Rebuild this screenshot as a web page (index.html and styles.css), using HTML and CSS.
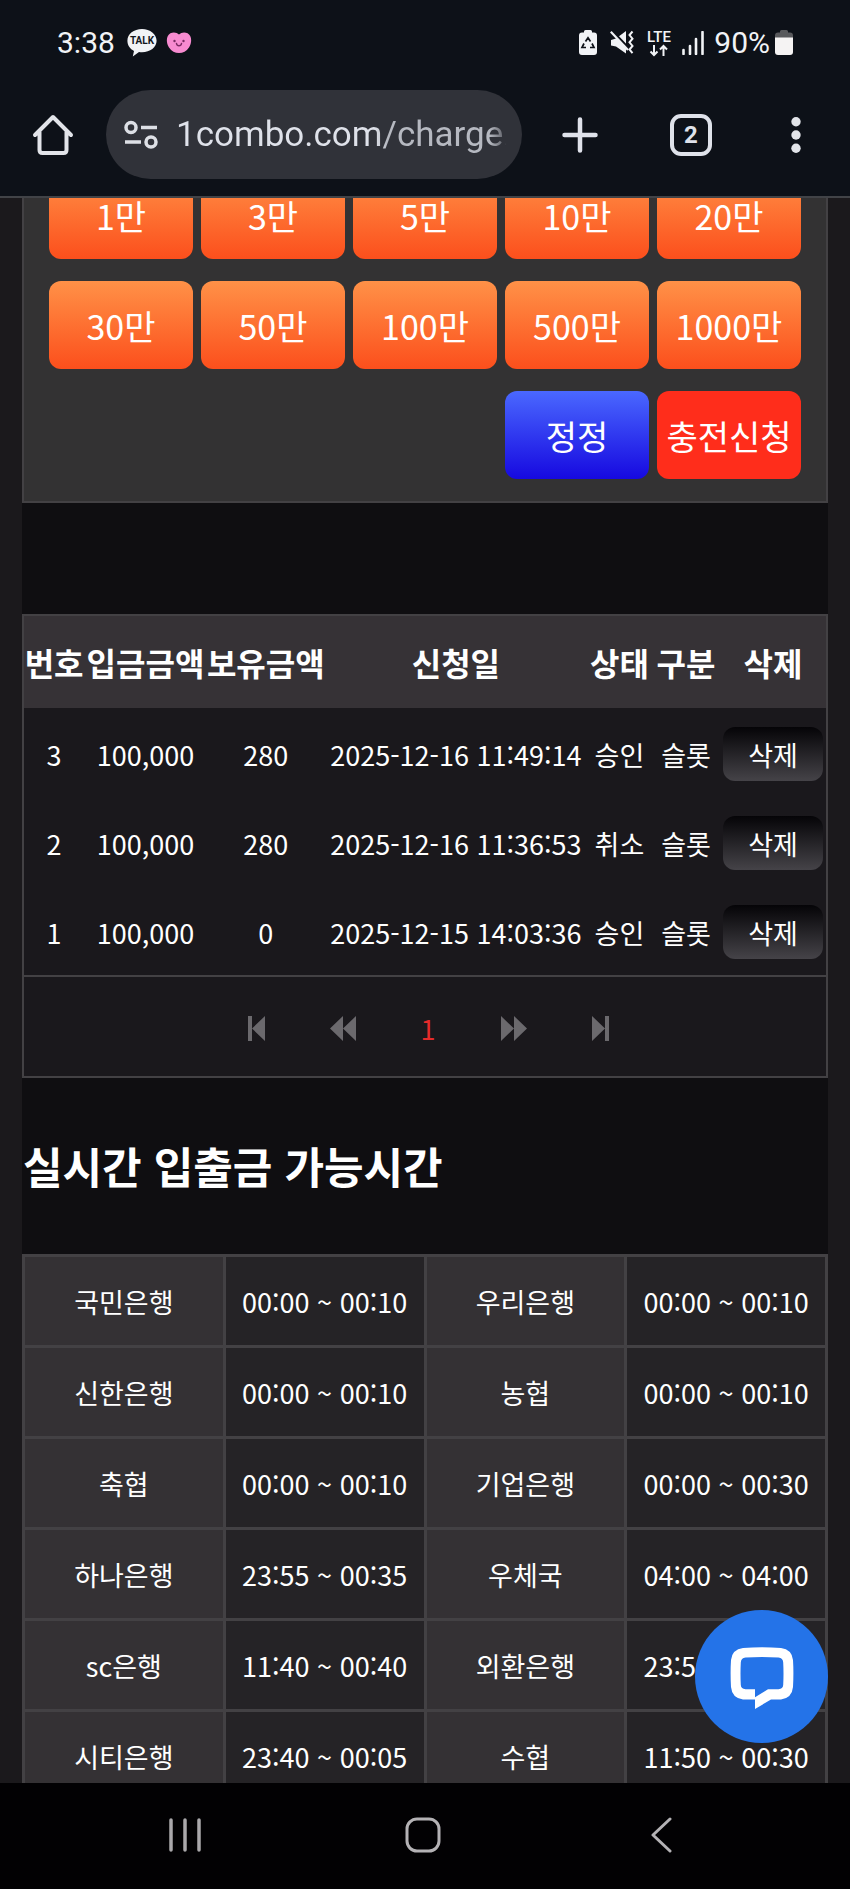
FILE: index.html
```html
<!DOCTYPE html>
<html lang="ko">
<head>
    <meta charset="UTF-8">
    <meta name="viewport" content="width=device-width, initial-scale=1.0">
    <title>충전신청</title>
    <link rel="stylesheet" href="styles.css">
</head>
<body>
<div class="screen">
    <header class="top">
        <div class="status">
            <span class="time">3:38</span>
            <svg class="talk" width="30" height="28" viewBox="0 0 30 28">
                <path d="M15 0C6.800 0 .4 5 .4 11.800c0 4.400 2.600 8.200 6.600 10.200L5.800 27.500l6.200-4.400c1 .1 2 .2 3 .2 8.200 0 14.600-5 14.600-11.500S23.200 0 15 0z" fill="#f1f3f6"/>
                <text class="talk-text" x="15" y="15" text-anchor="middle">TALK</text>
            </svg>
            <svg class="heart" width="26" height="22" viewBox="0 0 26 22">
                <path d="M13 2.500C10-.5 4-.2 1.800 4 .2 7 .6 12 3 15.500c2.500 3.800 6 5.500 10 5.500s7.500-1.700 10-5.500C25.400 12 25.800 7 24.200 4 22-.2 16-.5 13 2.500z" fill="#f78bd0"/>
                <circle cx="8.500" cy="9" r="1.200" fill="#7a2a63"/>
                <circle cx="17.500" cy="9" r="1.200" fill="#7a2a63"/>
                <path d="M10.500 11.500c.5 3 4.500 3 5 0" fill="none" stroke="#7a2a63" stroke-width="1.500" stroke-linecap="round"/>
            </svg>
            <div class="status-right">
                <svg width="18" height="25" viewBox="0 0 18 25">
                    <path d="M5 2.500V1.500Q5 0 6.500 0h5Q13 0 13 1.500v1h2Q18 2.500 18 5.500V22q0 3-3 3H3q-3 0-3-3V5.500q0-3 3-3z" fill="#f1f3f6"/>
                    <path d="M6.500 11.500L9 7.800l2.500 3.700M13 13.500l2 4h-4M7 17.500H3l2-4" fill="none" stroke="#0d1118" stroke-width="1.700"/>
                </svg>
                <svg class="mute" width="24" height="25" viewBox="0 0 24 25">
                    <path d="M1 10l5-1.500 10-7.500v22.500L6 16.500 1 15.500z" fill="#f1f3f6"/>
                    <path d="M2 1l19 20" stroke="#0d1118" stroke-width="3"/>
                    <path d="M.8 1.800L18 20" stroke="#f1f3f6" stroke-width="2.200"/>
                    <path d="M22.500 1.500l-3 3.600 3 3.600-3 3.600 3 3.600-3 3.600 3 3.600" fill="none" stroke="#f1f3f6" stroke-width="2"/>
                </svg>
                <svg class="lte" width="30" height="34" viewBox="0 0 30 34">
                    <text class="lte-text" x="15" y="16" text-anchor="middle">LTE</text>
                    <path d="M10 19v10M6.500 25.500L10 29l3.500-3.500M19.500 30V20M16 23.500l3.500-3.500 3.500 3.500" fill="none" stroke="#f1f3f6" stroke-width="2"/>
                </svg>
                <svg class="signal" width="22" height="24" viewBox="0 0 22 24">
                    <path d="M1.500 19v4M8 15v8M14 8v15M20.500 1v22" fill="none" stroke="#f1f3f6" stroke-width="2.600" stroke-linecap="round"/>
                </svg>
                <span>90%</span>
                <svg class="battery" width="18" height="25" viewBox="0 0 18 25">
                    <path d="M5 2.500V1.500Q5 0 6.500 0h5Q13 0 13 1.500v1h2Q18 2.500 18 5.500V8H0V5.500q0-3 3-3z" fill="#58595c"/>
                    <path d="M0 7.500h18V22q0 3-3 3H3q-3 0-3-3z" fill="#f5f3f3"/>
                </svg>
            </div>
        </div>

        <div class="toolbar">
            <button type="button" class="icon-btn" aria-label="홈">
                <svg width="42" height="42" viewBox="0 0 42 42" fill="none" stroke="#e2e4e9" stroke-width="4" stroke-linecap="round" stroke-linejoin="round">
                    <path d="M3 21L21 3l18 18M7.500 18v18q0 3 3 3h21q3 0 3-3V18"/>
                </svg>
            </button>
            <label class="address">
                <svg width="34" height="30" viewBox="0 0 34 30" fill="none" stroke="#dde0e6" stroke-width="3.500">
                    <circle cx="7" cy="7.500" r="5"/>
                    <path d="M17 7.500h16M1 22h16"/>
                    <circle cx="27" cy="22" r="5"/>
                </svg>
                <input type="text" class="url" value="1combo.com/charge." aria-label="주소">
            </label>
            <div class="actions">
                <button type="button" class="icon-btn" aria-label="새 탭">
                    <svg width="36" height="36" viewBox="0 0 36 36" stroke="#dfe2ea" stroke-width="4.500" stroke-linecap="round">
                        <path d="M18 2.500v31M2.500 18h31"/>
                    </svg>
                </button>
                <button type="button" class="tabs">2</button>
                <button type="button" class="icon-btn" aria-label="메뉴">
                    <svg width="24" height="36" viewBox="0 0 24 36" fill="#e2e4e9">
                        <circle cx="12" cy="4.700" r="4.700"/>
                        <circle cx="12" cy="18" r="4.700"/>
                        <circle cx="12" cy="31.300" r="4.700"/>
                    </svg>
                </button>
            </div>
        </div>
    </header>

    <main class="page">
        <div class="content">
            <form class="charge">
                <button type="button" class="amount">1만</button>
                <button type="button" class="amount">3만</button>
                <button type="button" class="amount">5만</button>
                <button type="button" class="amount">10만</button>
                <button type="button" class="amount">20만</button>
                <button type="button" class="amount">30만</button>
                <button type="button" class="amount">50만</button>
                <button type="button" class="amount">100만</button>
                <button type="button" class="amount">500만</button>
                <button type="button" class="amount">1000만</button>
                <button type="reset" class="amount reset">정정</button>
                <button type="button" class="amount submit">충전신청</button>
            </form>

            <table class="history">
                <colgroup>
                    <col class="c-no"><col class="c-amount"><col class="c-balance"><col class="c-date"><col class="c-state"><col class="c-type"><col class="c-delete">
                </colgroup>
                <thead>
                <tr>
                    <th>번호</th>
                    <th>입금금액</th>
                    <th>보유금액</th>
                    <th>신청일</th>
                    <th>상태</th>
                    <th>구분</th>
                    <th>삭제</th>
                </tr>
                </thead>
                <tbody>
                <tr>
                    <td>3</td>
                    <td>100,000</td>
                    <td>280</td>
                    <td>2025-12-16 11:49:14</td>
                    <td>승인</td>
                    <td>슬롯</td>
                    <td><button type="button" class="delete">삭제</button></td>
                </tr>
                <tr>
                    <td>2</td>
                    <td>100,000</td>
                    <td>280</td>
                    <td>2025-12-16 11:36:53</td>
                    <td>취소</td>
                    <td>슬롯</td>
                    <td><button type="button" class="delete">삭제</button></td>
                </tr>
                <tr>
                    <td>1</td>
                    <td>100,000</td>
                    <td>0</td>
                    <td>2025-12-15 14:03:36</td>
                    <td>승인</td>
                    <td>슬롯</td>
                    <td><button type="button" class="delete">삭제</button></td>
                </tr>
                </tbody>
            </table>

            <nav class="pager">
                <a href="#" aria-label="처음">
                    <svg width="17" height="25" viewBox="0 0 17 25"><path d="M0 0h4v25H0zM17 0v25L4 12.500z"/></svg>
                </a>
                <a href="#" aria-label="이전">
                    <svg width="26" height="25" viewBox="0 0 26 25"><path d="M13 0v25L0 12.500zM26 0v25L13 12.500z"/></svg>
                </a>
                <a href="#" class="current">1</a>
                <a href="#" aria-label="다음">
                    <svg width="26" height="25" viewBox="0 0 26 25"><path d="M0 0v25l13-12.500zM13 0v25l13-12.500z"/></svg>
                </a>
                <a href="#" aria-label="마지막">
                    <svg width="17" height="25" viewBox="0 0 17 25"><path d="M0 0v25l13-12.500zM13 0h4v25h-4z"/></svg>
                </a>
            </nav>

            <h2>실시간 입출금 가능시간</h2>

            <table class="banks">
                <tr>
                    <th>국민은행</th>
                    <td>00:00 ~ 00:10</td>
                    <th>우리은행</th>
                    <td>00:00 ~ 00:10</td>
                </tr>
                <tr>
                    <th>신한은행</th>
                    <td>00:00 ~ 00:10</td>
                    <th>농협</th>
                    <td>00:00 ~ 00:10</td>
                </tr>
                <tr>
                    <th>축협</th>
                    <td>00:00 ~ 00:10</td>
                    <th>기업은행</th>
                    <td>00:00 ~ 00:30</td>
                </tr>
                <tr>
                    <th>하나은행</th>
                    <td>23:55 ~ 00:35</td>
                    <th>우체국</th>
                    <td>04:00 ~ 04:00</td>
                </tr>
                <tr>
                    <th>sc은행</th>
                    <td>11:40 ~ 00:40</td>
                    <th>외환은행</th>
                    <td>23:55 ~ 00:05</td>
                </tr>
                <tr>
                    <th>시티은행</th>
                    <td>23:40 ~ 00:05</td>
                    <th>수협</th>
                    <td>11:50 ~ 00:30</td>
                </tr>
            </table>
        </div>

        <button type="button" class="chat" aria-label="상담">
            <svg width="64" height="64" viewBox="0 0 64 64">
                <path fill-rule="evenodd" fill="#fff" d="M13 1Q32-.6 51 1q11 1.500 12 12 .8 13 0 27-1 11-12 12.500H41L25 62V52.500H13Q2 51 1 40 .2 26 1 13 2 2.500 13 1zM15.500 10.500Q11 11 10.800 15.500q-.6 11 0 22.500.2 4 4.700 4.200H25v8l13-8h10.500q4.500-.2 4.700-4.200.6-11.500 0-22.500-.2-4.500-4.700-5-16.500-1-33 0z"/>
            </svg>
        </button>
    </main>

    <footer class="keys">
        <button type="button" class="icon-btn" aria-label="최근 앱">
            <svg width="36" height="36" viewBox="0 0 36 36" stroke="#aaa8ab" stroke-width="3.500" stroke-linecap="round">
                <path d="M4 3v30M18 3v30M32 3v30"/>
            </svg>
        </button>
        <button type="button" class="icon-btn" aria-label="홈 화면">
            <svg width="36" height="36" viewBox="0 0 36 36" fill="none" stroke="#b4b2b5" stroke-width="3">
                <rect x="2" y="2" width="32" height="32" rx="10"/>
            </svg>
        </button>
        <button type="button" class="icon-btn" aria-label="뒤로">
            <svg width="36" height="36" viewBox="0 0 36 36" fill="none" stroke="#b4b2b5" stroke-width="3" stroke-linecap="round" stroke-linejoin="round">
                <path d="M27 2L10 18l17 16"/>
            </svg>
        </button>
    </footer>
</div>
</body>
</html>
```

FILE: styles.css
```css
* {
    box-sizing: border-box;
}
body {
    margin: 0;
    background: #1b191c;
    color: #fff;
    font-family: "Noto Sans CJK KR", sans-serif;
    font-size: 27px;
}
button, input {
    font-family: inherit;
    color: inherit;
    border: none;
    padding: 0;
}
button {
    cursor: pointer;
}
svg {
    display: block;
}
.screen {
    display: flex;
    flex-direction: column;
    height: 100vh;
}

/* status bar and toolbar */
.top {
    flex: none;
    background: #0d1118;
    border-bottom: 2px solid #414347;
    font-family: Roboto, sans-serif;
}
.status {
    display: flex;
    align-items: center;
    height: 85px;
    padding: 0 57px;
    color: #f1f3f6;
    font-size: 30px;
}
.talk {
    margin-left: 12px;
}
.talk-text {
    font: bold 10px Roboto, sans-serif;
    fill: #14171d;
}
.heart {
    margin-left: 9px;
}
.status-right {
    display: flex;
    align-items: center;
    margin-left: auto;
}
.mute {
    margin-left: 13px;
}
.lte {
    margin-left: 10px;
}
.lte-text {
    font: 500 15px Roboto, sans-serif;
    fill: #f1f3f6;
}
.signal {
    margin: 0 10px 0 8px;
}
.battery {
    margin-left: 5px;
}
.toolbar {
    display: flex;
    align-items: center;
    padding: 5px 42px 17px 32px;
}
.icon-btn {
    background: none;
}
.address {
    flex: 1;
    min-width: 0;
    display: flex;
    align-items: center;
    gap: 18px;
    height: 89px;
    margin: 0 40px 0 32px;
    padding: 0 16px 0 18px;
    border-radius: 45px;
    background: #303239;
}
.url {
    flex: 1;
    min-width: 0;
    height: 60px;
    font-size: 35px;
    outline: none;
    color: transparent;
    background: linear-gradient(90deg, #dfe2ea 60%, #b6b9c1 64%, #b6b9c1 95%, #55575e 100%);
    -webkit-background-clip: text;
    background-clip: text;
}
.actions {
    display: flex;
    align-items: center;
    gap: 72px;
}
.tabs {
    width: 42px;
    height: 42px;
    border: 4px solid #dfe2ea;
    border-radius: 11px;
    background: none;
    color: #dfe2ea;
    font-size: 24px;
    font-weight: bold;
}

/* page */
.page {
    flex: 1;
    min-height: 0;
    overflow: hidden;
    position: relative;
    padding: 0 22px;
}
.content {
    background: #0f0e11;
}
.charge {
    display: grid;
    grid-template-columns: repeat(5, 1fr);
    gap: 22px 8px;
    margin-top: -51px;
    padding: 22px 25px;
    border: 2px solid #434144;
    background: #333233;
}
.amount {
    height: 88px;
    border-radius: 12px;
    background: linear-gradient(#ff9147, #fc4f1c);
    font-size: 34px;
    white-space: nowrap;
}
.reset {
    grid-column: 4;
    background: linear-gradient(#4a68ff, #1609e0);
}
.submit {
    background: #ff2d1b;
}

.history {
    width: 100%;
    margin-top: 111px;
    table-layout: fixed;
    border-collapse: separate;
    border-spacing: 0;
    border: 2px solid #434144;
    border-bottom: none;
    background: #1a181c;
    text-align: center;
    white-space: nowrap;
}
.history th {
    height: 92px;
    padding: 0;
    background: #363236;
    font-size: 32px;
}
.history td {
    height: 89px;
    padding: 3px 0 0;
}
.c-no { width: 7.5%; }
.c-amount { width: 15.3%; }
.c-balance { width: 14.7%; }
.c-date { width: 32.7%; }
.c-state { width: 8.1%; }
.c-type { width: 8.5%; }
.c-delete { width: 13.2%; }
.delete {
    width: 100px;
    height: 54px;
    border-radius: 12px;
    background: linear-gradient(#050407, #454348);
    font-size: 27px;
}
.pager {
    display: flex;
    justify-content: center;
    align-items: center;
    gap: 65px;
    height: 103px;
    padding: 4px 0 0 6px;
    border: 2px solid #434144;
    background: #1a181c;
}
.pager a {
    color: #6b696d;
    text-decoration: none;
}
.pager svg {
    fill: #6b696d;
}
.pager .current {
    color: #e32b2b;
}

h2 {
    margin: 0;
    padding: 55px 1px 56px;
    font-size: 43px;
    line-height: 65px;
}
.banks {
    width: 100%;
    table-layout: fixed;
    border-collapse: collapse;
    text-align: center;
    white-space: nowrap;
}
.banks th, .banks td {
    height: 91px;
    padding: 0;
    border: 3px solid #434144;
    background: #252326;
}
.banks th {
    background: #343134;
    font-weight: normal;
}
.chat {
    position: absolute;
    right: 22px;
    bottom: 40px;
    display: flex;
    justify-content: center;
    align-items: center;
    width: 133px;
    height: 133px;
    padding-top: 4px;
    border-radius: 50%;
    background: #2473e8;
}

/* navigation keys */
.keys {
    flex: none;
    display: grid;
    grid-template-columns: repeat(3, 1fr);
    justify-items: center;
    align-items: center;
    height: 106px;
    padding: 0 70px 2px 66px;
    background: #020103;
}
```
